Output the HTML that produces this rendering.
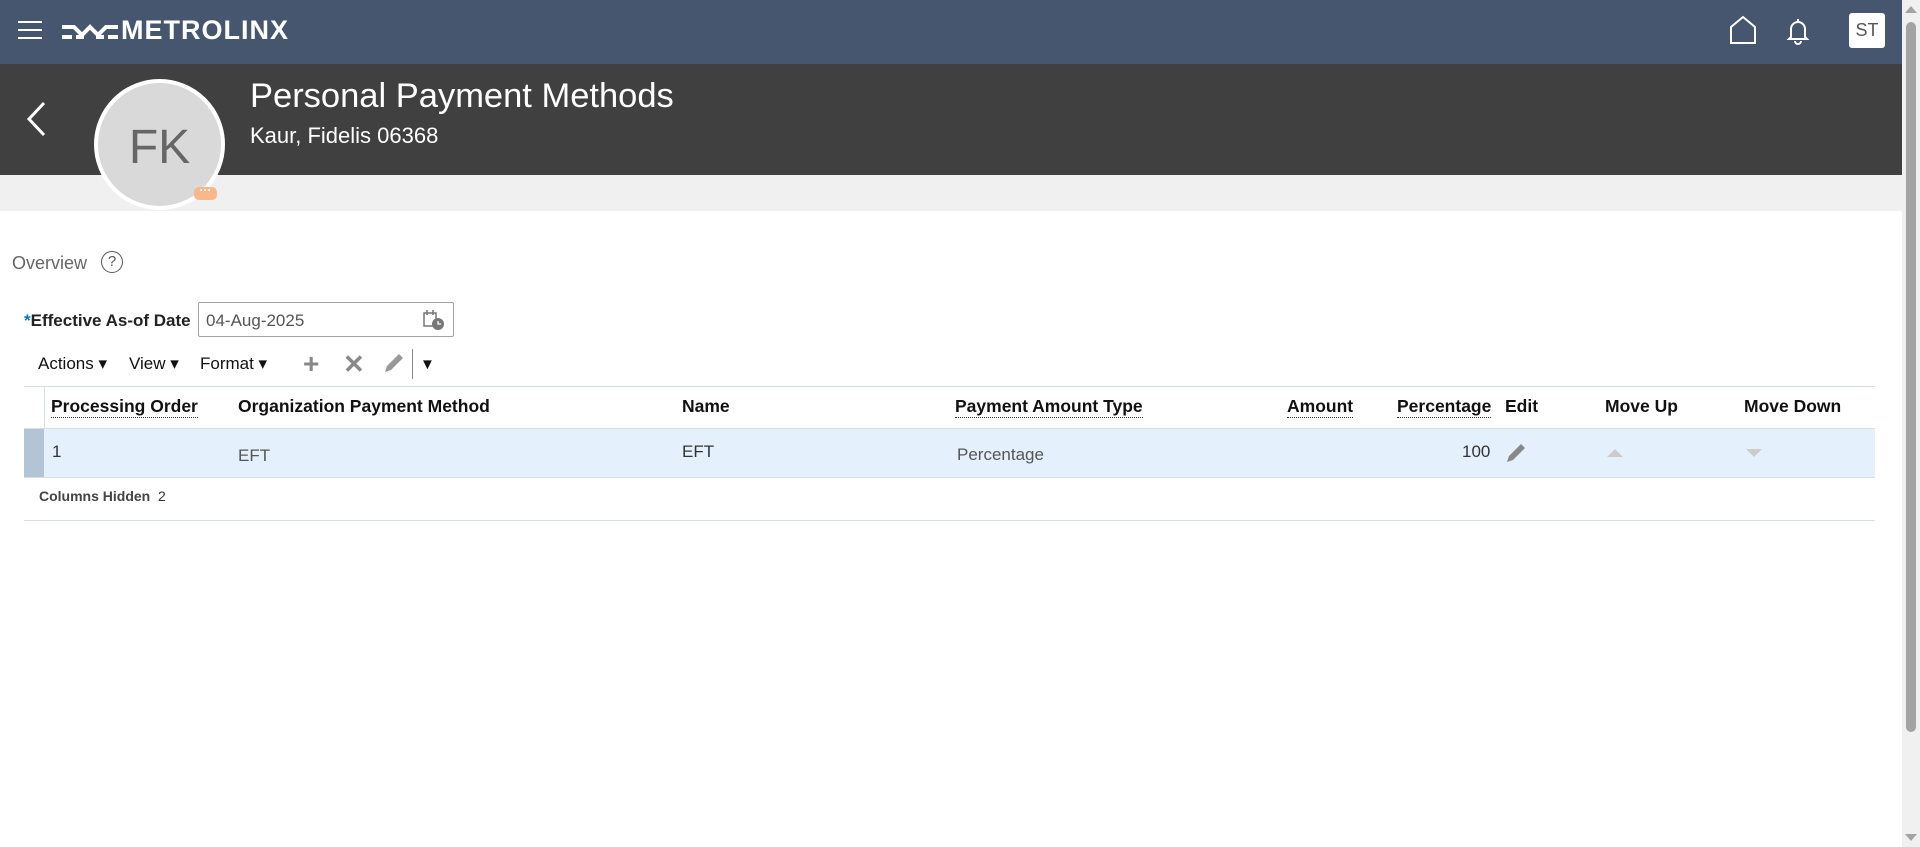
<!DOCTYPE html>
<html><head><meta charset="utf-8"><style>
*{margin:0;padding:0;box-sizing:border-box}
body{width:1920px;height:847px;overflow:hidden;background:#fff;font-family:"Liberation Sans",Arial,sans-serif;position:relative}
.a{position:absolute}
.top{left:0;top:0;width:1902px;height:64px;background:#46566f}
.dark{left:0;top:64px;width:1902px;height:111px;background:#404040}
.gray{left:0;top:175px;width:1902px;height:36px;background:#f0f0f0}
.th{position:absolute;top:396px;font-size:17.5px;font-weight:bold;color:#111;white-space:nowrap}
.dot{border-bottom:1px dotted #333}
.td{position:absolute;font-size:17px;color:#333;white-space:nowrap}
</style></head><body>
<div class="a top"></div>
<div class="a dark"></div>
<div class="a gray"></div>
<div class="a" style="left:18px;top:21px;width:24px;height:2px;background:#fff"></div>
<div class="a" style="left:18px;top:29px;width:24px;height:2px;background:#fff"></div>
<div class="a" style="left:18px;top:37px;width:24px;height:2px;background:#fff"></div>
<svg class="a" style="left:62px;top:18px" width="56" height="26" viewBox="0 0 56 26"><g fill="none" stroke="#fff" stroke-width="4"><path d="M0 9H12L20 17L28 9L36 17L44 9H56"/><path d="M0 19H10M46 19H56M14 19h8M34 19h8"/></g></svg>
<div class="a" style="left:121px;top:15px;font-size:27px;font-weight:bold;color:#fff;letter-spacing:1px">METROLINX</div>
<svg class="a" style="left:1728px;top:15px" width="30" height="30" viewBox="0 0 30 30"><path d="M3 28V12L15 2L27 12V28Z" fill="none" stroke="#fff" stroke-width="2"/></svg>
<svg class="a" style="left:1786px;top:17px" width="24" height="28" viewBox="0 0 24 28"><path d="M12 2v2M5 20V12a7 7 0 0114 0v8l2 2H3z M9 24a3 3 0 006 0" fill="none" stroke="#fff" stroke-width="2"/></svg>
<div class="a" style="left:1849px;top:13px;width:36px;height:35px;background:#fff;border-radius:3px;color:#555;font-size:18px;text-align:center;line-height:35px">ST</div>
<svg class="a" style="left:24px;top:100px" width="24" height="38" viewBox="0 0 24 38"><path d="M20 3L5 19L20 35" fill="none" stroke="#fff" stroke-width="3"/></svg>
<div class="a" style="left:94px;top:79px;width:131px;height:131px;border-radius:50%;background:#d9d9d9;border:4px solid #fff"></div>
<div class="a" style="left:94px;top:120px;width:131px;text-align:center;font-size:48px;color:#666">FK</div>
<div class="a" style="left:194px;top:187px;width:23px;height:13px;border-radius:5px;background:#f9b88b;color:#fff;font-size:12px;line-height:7px;text-align:center;font-weight:bold">···</div>
<div class="a" style="left:250px;top:77px;font-size:34.5px;color:#fff">Personal Payment Methods</div>
<div class="a" style="left:250px;top:123px;font-size:22px;color:#fff">Kaur, Fidelis 06368</div>
<div class="a" style="left:12px;top:253px;font-size:18px;color:#666">Overview</div>
<div class="a" style="left:101px;top:251px;width:22px;height:22px;border:1.5px solid #555;border-radius:50%;text-align:center;font-size:15px;line-height:19px;color:#555">?</div>
<div class="a" style="left:24px;top:311px;font-size:17px;font-weight:bold;color:#222"><span style="color:#0572ce">*</span>Effective As-of Date</div>
<div class="a" style="left:198px;top:302px;width:256px;height:35px;border:1px solid #a5a5a5;border-radius:2px"></div>
<div class="a" style="left:206px;top:311px;font-size:17px;color:#555">04-Aug-2025</div>
<svg class="a" style="left:423px;top:309px" width="22" height="22" viewBox="0 0 22 22"><rect x="1" y="4" width="12" height="13" fill="none" stroke="#777" stroke-width="1.5"/><path d="M4 1v5M10 1v5" stroke="#777" stroke-width="1.5"/><circle cx="15" cy="15" r="6" fill="#777"/><path d="M15 12v3h3" stroke="#fff" stroke-width="1.3" fill="none"/></svg>
<div class="a" style="left:38px;top:354px;font-size:17px;color:#111">Actions ▾</div>
<div class="a" style="left:129px;top:354px;font-size:17px;color:#111">View ▾</div>
<div class="a" style="left:200px;top:354px;font-size:17px;color:#111">Format ▾</div>
<div class="a" style="left:303px;top:348px;font-size:28px;font-weight:bold;color:#888">+</div>
<div class="a" style="left:343px;top:349px;font-size:26px;font-weight:bold;color:#888">✕</div>
<svg class="a" style="left:383px;top:352px" width="22" height="22" viewBox="0 0 22 22"><path d="M2 20l2-6L16 2l4 4L8 18z" fill="#999"/></svg>
<div class="a" style="left:412px;top:349px;width:1px;height:30px;background:#888"></div>
<div class="a" style="left:420px;top:356px;font-size:15px;color:#111">▼</div>
<div class="a" style="left:24px;top:386px;width:1851px;height:1px;background:#d6dfe6"></div>
<div class="a" style="left:44px;top:386px;width:1px;height:43px;background:#d6dfe6"></div>
<div class="th dot" style="left:51px">Processing Order</div>
<div class="th" style="left:238px">Organization Payment Method</div>
<div class="th" style="left:682px">Name</div>
<div class="th dot" style="left:955px">Payment Amount Type</div>
<div class="th dot" style="left:1287px">Amount</div>
<div class="th dot" style="left:1397px">Percentage</div>
<div class="th" style="left:1505px">Edit</div>
<div class="th" style="left:1605px">Move Up</div>
<div class="th" style="left:1744px">Move Down</div>
<div class="a" style="left:24px;top:428px;width:1851px;height:50px;background:#e4f0fc;border-top:1px solid #d6dfe6;border-bottom:1px solid #d6dfe6"></div>
<div class="a" style="left:24px;top:429px;width:20px;height:48px;background:#b3c5d5"></div>
<div class="td" style="left:52px;top:442px">1</div>
<div class="td" style="left:238px;top:446px;color:#555">EFT</div>
<div class="td" style="left:682px;top:442px">EFT</div>
<div class="td" style="left:957px;top:445px;color:#555">Percentage</div>
<div class="td" style="left:1462px;top:442px">100</div>
<svg class="a" style="left:1505px;top:442px" width="22" height="22" viewBox="0 0 22 22"><path d="M2 20l2-6L16 2l4 4L8 18z" fill="#888"/></svg>
<div class="a" style="left:1607px;top:449px;width:0;height:0;border-left:8px solid transparent;border-right:8px solid transparent;border-bottom:8px solid #ccc"></div>
<div class="a" style="left:1746px;top:449px;width:0;height:0;border-left:8px solid transparent;border-right:8px solid transparent;border-top:8px solid #ccc"></div>
<div class="a" style="left:39px;top:488px;font-size:14px;font-weight:bold;color:#444">Columns Hidden &nbsp;<span style="font-weight:normal;color:#333">2</span></div>
<div class="a" style="left:24px;top:520px;width:1851px;height:1px;background:#d6dfe6"></div>
<div class="a" style="left:1902px;top:0;width:18px;height:847px;background:#f0f0f0"></div>
<div class="a" style="left:1906px;top:22px;width:10px;height:710px;background:#a3a3a3;border-radius:5px"></div>
<div class="a" style="left:1905px;top:6px;width:0;height:0;border-left:6px solid transparent;border-right:6px solid transparent;border-bottom:7px solid #a3a3a3"></div>
<div class="a" style="left:1905px;top:834px;width:0;height:0;border-left:6px solid transparent;border-right:6px solid transparent;border-top:7px solid #a3a3a3"></div>
</body></html>
